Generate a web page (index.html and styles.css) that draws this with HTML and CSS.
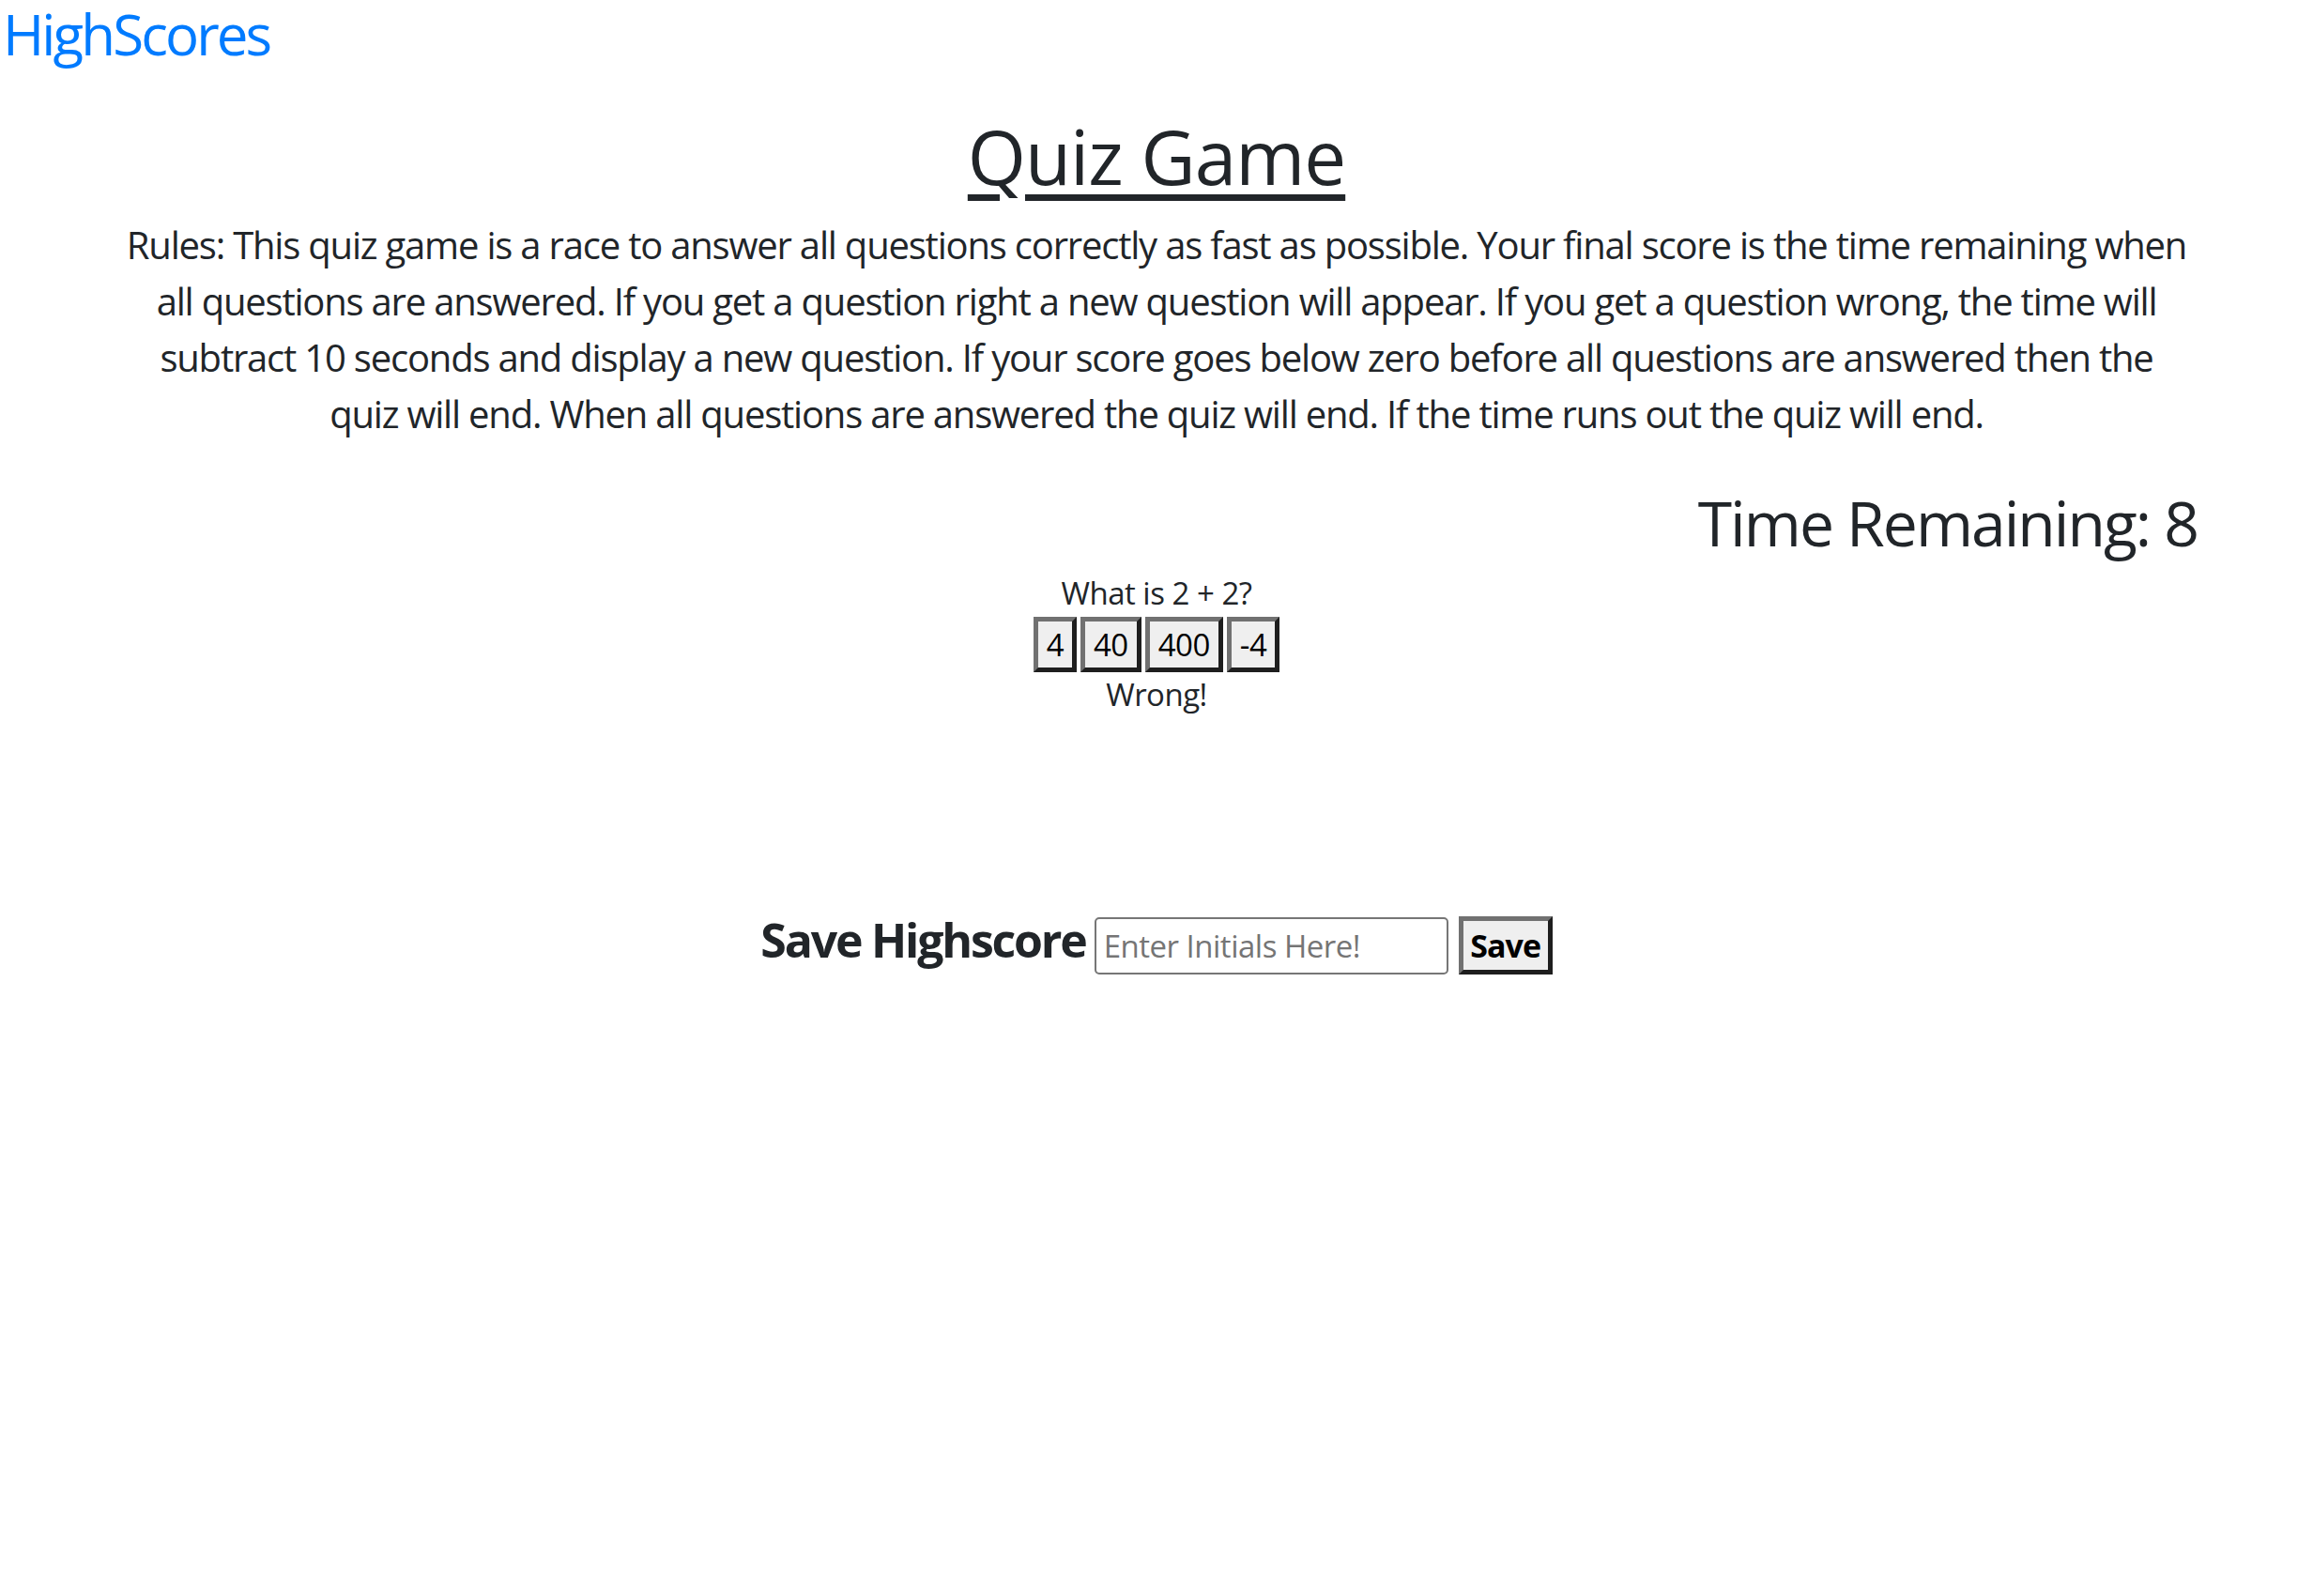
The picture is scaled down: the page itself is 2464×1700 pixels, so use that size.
FILE: index.html
```html
<!DOCTYPE html>
<html lang="en">
<head>
<meta charset="utf-8">
<title>Quiz Game</title>
<link rel="stylesheet" href="styles.css">
</head>
<body>
<header class="topbar">
  <a class="brand" href="#">HighScores</a>
</header>
<main class="quiz">
  <h1 class="title">Quiz Game</h1>
  <p class="rules">Rules: This quiz game is a race to answer all questions correctly as fast as possible. Your final score is the time remaining when all questions are answered. If you get a question right a new question will appear. If you get a question wrong, the time will subtract 10 seconds and display a new question. If your score goes below zero before all questions are answered then the quiz will end. When all questions are answered the quiz will end. If the time runs out the quiz will end.</p>
  <h2 class="timer">Time Remaining: 8</h2>
  <section class="question">
    <p class="prompt">What is 2 + 2?</p>
    <div class="choices">
      <button class="choice" type="button">4</button>
      <button class="choice" type="button">40</button>
      <button class="choice" type="button">400</button>
      <button class="choice" type="button">-4</button>
    </div>
    <p class="result">Wrong!</p>
  </section>
  <form class="save-row">
    <h3 class="save-label">Save Highscore</h3>
    <input class="initials" type="text" placeholder="Enter Initials Here!">
    <button class="save-btn" type="button">Save</button>
  </form>
</main>
</body>
</html>
```

FILE: styles.css
```css
html, body {
  margin: 0;
  padding: 0;
  background: #ffffff;
}

body {
  font-family: "Open Sans", "Noto Sans", sans-serif;
  color: #212529;
}

.topbar {
  height: 70px;
  padding: 2px 0 0 3px;
  box-sizing: border-box;
}

.brand {
  display: inline-block;
  font-size: 60px;
  line-height: 68px;
  color: #007bff;
  text-decoration: none;
  letter-spacing: -2.9px;
}

.quiz {
  padding: 0 123px;
  display: flex;
  flex-direction: column;
}

.title {
  margin: 48px 0 0;
  font-size: 80px;
  line-height: 96px;
  font-weight: 400;
  text-align: center;
  text-decoration: underline;
  text-decoration-thickness: 7px;
  text-underline-offset: 10px;
  letter-spacing: -1px;
}

.rules {
  margin: 17px 9px 0;
  font-size: 40px;
  line-height: 60px;
  text-align: center;
  letter-spacing: -1.2px;
}

.timer {
  margin: 45px 0 0;
  font-size: 66px;
  line-height: 80px;
  font-weight: 400;
  text-align: right;
  letter-spacing: -2px;
}

.question {
  display: flex;
  flex-direction: column;
  align-items: center;
  margin-top: 16px;
}

.prompt,
.result {
  margin: 0;
  font-size: 33px;
  line-height: 40px;
  letter-spacing: -0.5px;
}

.choices {
  display: flex;
  gap: 4px;
  margin: 5px 0 4px;
}

.choice {
  height: 59px;
  box-sizing: border-box;
  padding: 0 9px;
  font-family: "Open Sans", "Noto Sans", sans-serif;
  font-size: 33px;
  line-height: 45px;
  color: #000000;
  background: #efefef;
  border-width: 5px;
  border-style: solid;
  border-color: #717171 #1e1e1e #1e1e1e #717171;
  letter-spacing: -0.5px;
}

.save-row {
  display: flex;
  justify-content: center;
  align-items: baseline;
  margin-top: 211px;
}

.save-label {
  margin: 0 9px 0 0;
  font-size: 50px;
  line-height: 60px;
  font-weight: 700;
  letter-spacing: -2.2px;
}

.initials {
  width: 377px;
  height: 61px;
  box-sizing: border-box;
  padding: 0 8px;
  font-family: "Open Sans", "Noto Sans", sans-serif;
  font-size: 33px;
  color: #212529;
  border: 2.5px solid #767676;
  border-radius: 5px;
  letter-spacing: -0.5px;
}

.initials::placeholder {
  color: #757575;
}

.save-btn {
  margin-left: 11px;
  width: 100px;
  height: 62px;
  box-sizing: border-box;
  padding: 0;
  font-family: "Open Sans", "Noto Sans", sans-serif;
  font-size: 34px;
  font-weight: 700;
  color: #000000;
  background: #efefef;
  border-width: 5px;
  border-style: solid;
  border-color: #717171 #1e1e1e #1e1e1e #717171;
  letter-spacing: -1px;
}
```
